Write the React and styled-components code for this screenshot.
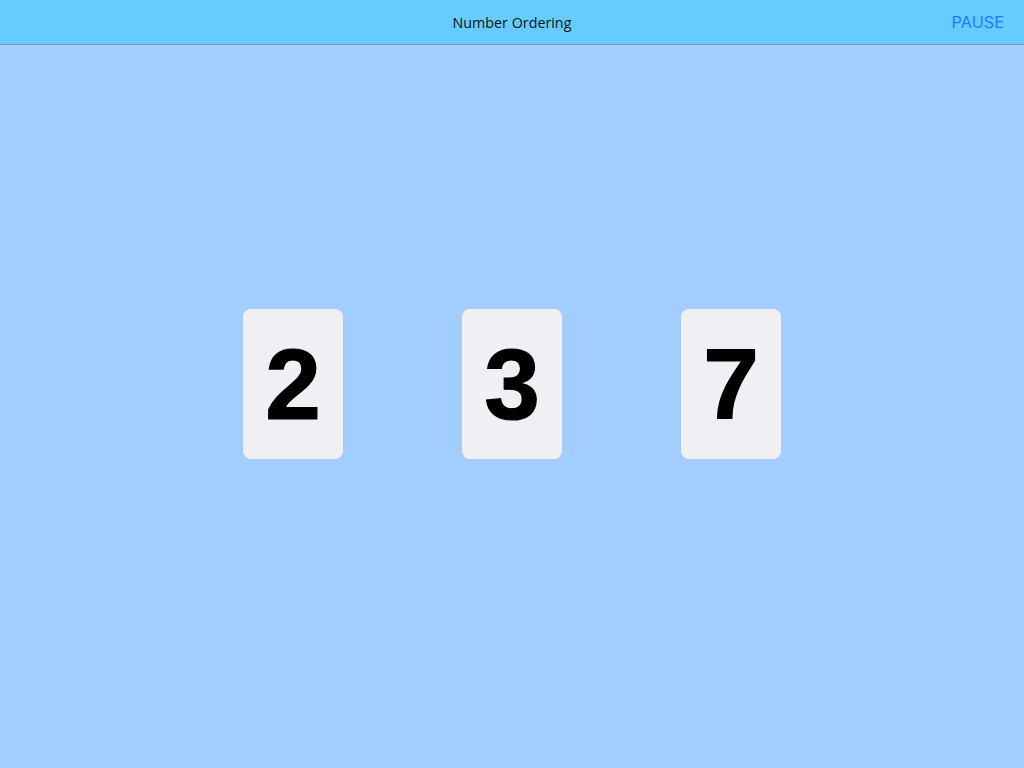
import React from "react"
import styled, { createGlobalStyle } from 'styled-components'

const Global = createGlobalStyle`
  html, body {
    margin: 0;
    padding: 0;
  }
  body {
    font-family: "Open Sans", "Noto Sans", sans-serif;
    background: #a3cdff;
  }
`

const Page = styled.div`
  width: 1024px;
  height: 768px;
  display: flex;
  flex-direction: column;
  background: #a3cdff;
`

const Header = styled.header`
  height: 44px;
  flex: none;
  display: grid;
  grid-template-columns: 1fr auto 1fr;
  align-items: center;
  padding: 0 20px;
  background: #66ccff;
  border-bottom: 1px solid #8a93b0;
`

const Title = styled.h1`
  grid-column: 2;
  margin: 0;
  font-size: 14.3px;
  font-weight: 400;
  color: #111;
`

const PauseButton = styled.button`
  justify-self: end;
  border: 0;
  background: none;
  padding: 0;
  font-family: "Inter", "Noto Sans", sans-serif;
  font-size: 16.3px;
  color: #1a7fff;
  cursor: pointer;
`

const Board = styled.main`
  flex: 1;
  display: flex;
  justify-content: center;
  align-items: flex-start;
  padding-top: 264px;
  gap: 119px;
`

const Card = styled.div`
  width: 100px;
  height: 150px;
  border-radius: 8px;
  background: #efeff4;
  display: flex;
  align-items: center;
  justify-content: center;
  font-family: "Liberation Sans", Arial, sans-serif;
  font-weight: 700;
  font-size: 100px;
  line-height: 1;
  color: #000;
  -webkit-text-stroke: 1.2px #000;
`

const numbers = [2, 3, 7]

function App() {
  return (
    <>
      <Global />
      <Page>
        <Header>
          <Title>Number Ordering</Title>
          <PauseButton>PAUSE</PauseButton>
        </Header>
        <Board>
          {numbers.map(n => (
            <Card key={n}>{n}</Card>
          ))}
        </Board>
      </Page>
    </>
  )
}

export default App
